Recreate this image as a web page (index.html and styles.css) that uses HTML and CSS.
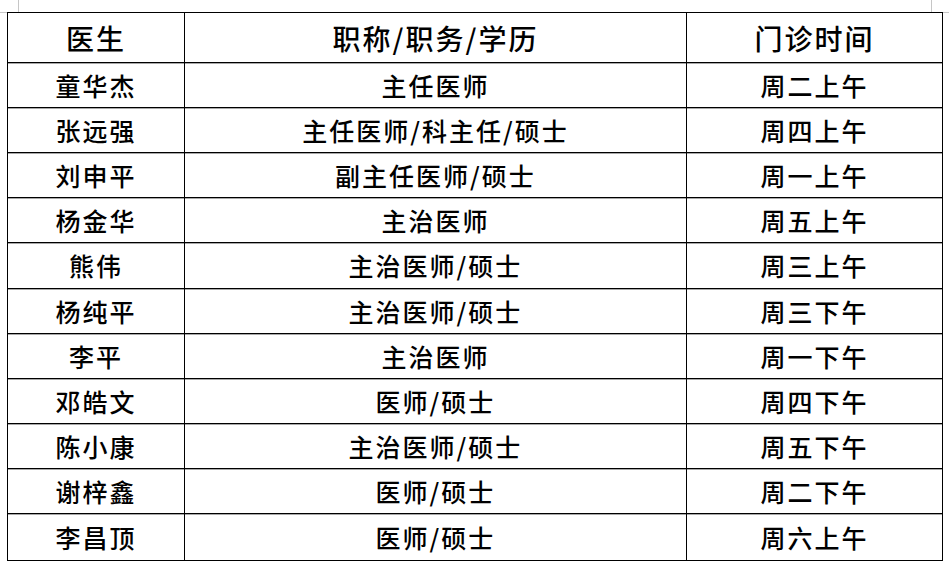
FILE: index.html
```html
<!DOCTYPE html>
<html lang="zh-CN">
<head>
<meta charset="utf-8">
<title>门诊时间表</title>
<link rel="stylesheet" href="styles.css">
</head>
<body>
<div class="page">
  <div class="sheet">
    <div class="cell head">医生</div>
    <div class="cell head">职称/职务/学历</div>
    <div class="cell head">门诊时间</div>

    <div class="cell">童华杰</div><div class="cell">主任医师</div><div class="cell">周二上午</div>
    <div class="cell">张远强</div><div class="cell">主任医师/科主任/硕士</div><div class="cell">周四上午</div>
    <div class="cell">刘申平</div><div class="cell">副主任医师/硕士</div><div class="cell">周一上午</div>
    <div class="cell">杨金华</div><div class="cell">主治医师</div><div class="cell">周五上午</div>
    <div class="cell">熊伟</div><div class="cell">主治医师/硕士</div><div class="cell">周三上午</div>
    <div class="cell">杨纯平</div><div class="cell">主治医师/硕士</div><div class="cell">周三下午</div>
    <div class="cell">李平</div><div class="cell">主治医师</div><div class="cell">周一下午</div>
    <div class="cell">邓皓文</div><div class="cell">医师/硕士</div><div class="cell">周四下午</div>
    <div class="cell">陈小康</div><div class="cell">主治医师/硕士</div><div class="cell">周五下午</div>
    <div class="cell">谢梓鑫</div><div class="cell">医师/硕士</div><div class="cell">周二下午</div>
    <div class="cell last">李昌顶</div><div class="cell last">医师/硕士</div><div class="cell last">周六上午</div>
  </div>
</div>
</body>
</html>
```
FILE: styles.css
```css
* { box-sizing: border-box; }
html, body { margin: 0; padding: 0; background: #fff; }
.page {
  width: 949px;
  height: 571px;
  padding: 12px 0 0 7px;
  background-color: #fff;
  background-image:
    linear-gradient(#c6c6c6, #c6c6c6),
    linear-gradient(#c6c6c6, #c6c6c6),
    linear-gradient(#c6c6c6, #c6c6c6),
    linear-gradient(#c6c6c6, #c6c6c6);
  background-repeat: no-repeat;
  background-size: 1px 12px, 7px 1px, 1px 12px, 6px 1px;
  background-position: 18px 0, 0 12px, 931px 0, 943px 12px;
  font-family: "Noto Sans CJK SC", sans-serif;
  color: #000;
}
.sheet {
  width: 936px;
  display: grid;
  grid-template-columns: 177px 502px 255px;
  grid-template-rows: 50px 45px 45px 45px 45px 46px 45px 45px 45px 45px 45px 46px;
  border: 1px solid #000;
}
.cell {
  display: flex;
  align-items: center;
  justify-content: center;
  border-right: 1px solid #000;
  border-bottom: 1px solid #000;
  box-shadow: inset 0 1px 0 #a8a8a8;
  font-size: 25px;
  font-weight: 500;
  letter-spacing: 2px;
  line-height: 1;
  white-space: nowrap;
}
.cell:nth-child(3n) { border-right: none; }
.cell.last { border-bottom: none; }
.cell.head {
  font-size: 28px;
  box-shadow: none;
}
```
